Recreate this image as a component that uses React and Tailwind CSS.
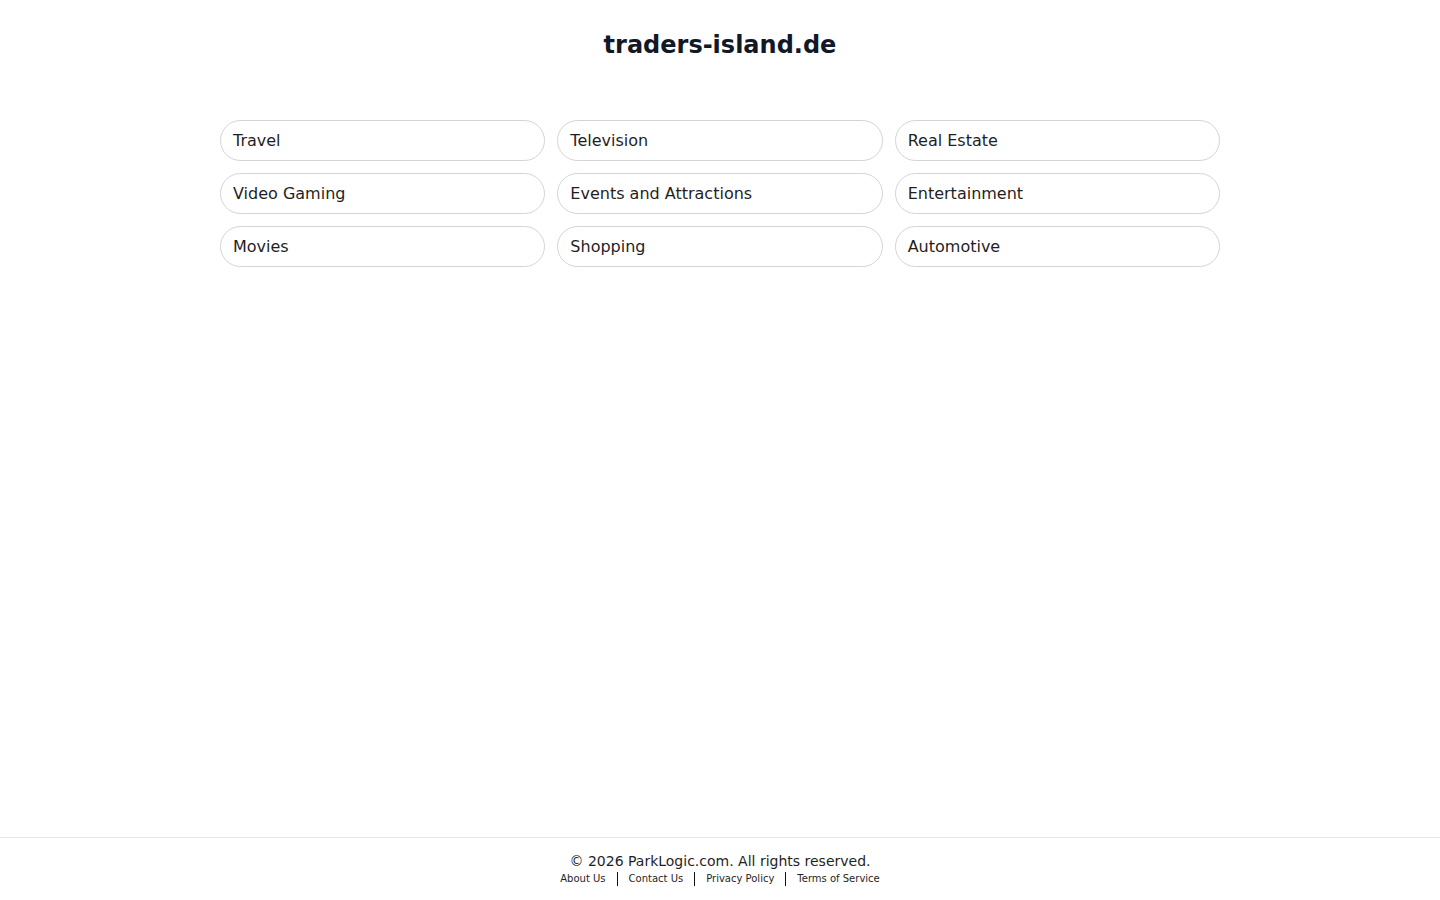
const categories = [
	"Travel",
	"Television",
	"Real Estate",
	"Video Gaming",
	"Events and Attractions",
	"Entertainment",
	"Movies",
	"Shopping",
	"Automotive",
];

const links = ["About Us", "Contact Us", "Privacy Policy", "Terms of Service"];

const App = () => {
	return (
		<div
			className="min-h-screen flex flex-col bg-white text-[#111827]"
			style={{ fontFamily: '"DejaVu Sans", sans-serif' }}
		>
			<main className="flex-1">
				<h1 className="pt-[29px] text-center text-2xl leading-8 font-bold text-[#111827]">
					traders-island.de
				</h1>
				<div className="mx-auto mt-[59px] w-[1000px] grid grid-cols-3 gap-3">
					{categories.map((c) => (
						<a
							key={c}
							href="#"
							className="block h-[41px] rounded-full border border-[#d4d4d4] px-[12px] text-base leading-[39px] text-[#1f1f1f]"
						>
							{c}
						</a>
					))}
				</div>
			</main>
			<footer className="h-[63px] border-t border-[#e5e5e5] pt-[14px] text-center">
				<p className="text-sm leading-[18px] text-[#1f1f1f]">
					© 2026 ParkLogic.com. All rights reserved.
				</p>
				<div className="mt-[2px] flex justify-center items-center text-[10px] text-[#1f1f1f]">
					{links.map((l, i) => (
						<a
							key={l}
							href="#"
							className={
								i === 0
									? "px-[11px] leading-[14px]"
									: "px-[11px] border-l border-[#111] leading-[14px]"
							}
						>
							{l}
						</a>
					))}
				</div>
			</footer>
		</div>
	);
};

export default App;
